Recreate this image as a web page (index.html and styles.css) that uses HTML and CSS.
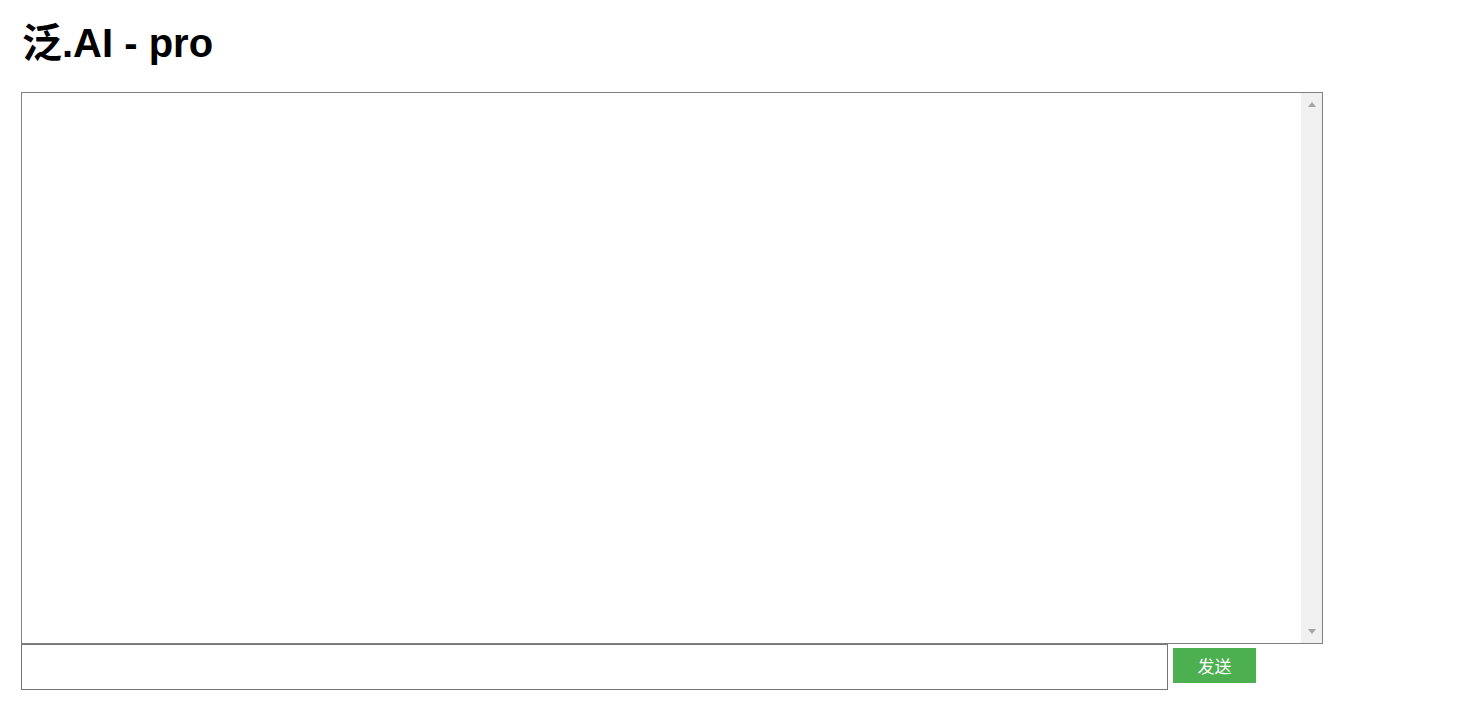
FILE: index.html
```html
<!DOCTYPE html>
<html lang="zh">
<head>
  <meta charset="UTF-8">
  <title>泛.AI - pro</title>
  <link rel="stylesheet" href="styles.css">
</head>
<body>
  <h1 class="title">泛.AI - pro</h1>

  <div class="chat-box">
    <div id="messages" class="messages"></div>
    <div class="scroll-track">
      <span class="arrow-up"></span>
      <span class="arrow-down"></span>
    </div>
  </div>

  <div class="input-row">
    <input type="text" id="user-input" class="user-input">
    <button class="btn-send" onclick="sendMessage()">发送</button>
  </div>

  <script>
    function sendMessage() {
      const input = document.getElementById('user-input');
      const box = document.getElementById('messages');
      const text = input.value.trim();
      if (!text) return;
      const p = document.createElement('p');
      p.textContent = text;
      box.appendChild(p);
      input.value = '';
    }
  </script>
</body>
</html>
```

FILE: styles.css
```css
body {
  margin: 0;
  padding: 0 21px;
  font-family: "Liberation Sans", "Noto Sans CJK SC", Arial, sans-serif;
  background-color: white;
}
.title {
  margin: 0;
  padding: 20px 0 0 1px;
  height: 92px;
  box-sizing: border-box;
  font-size: 40px;
  line-height: 46px;
  font-weight: bold;
  color: black;
}
.chat-box {
  display: flex;
  width: 1300px;
  height: 550px;
  border: 1px solid #808080;
  background-color: white;
}
.messages {
  flex: 1;
  overflow-y: auto;
  padding: 0 10px;
}
.scroll-track {
  width: 21px;
  background-color: #f0f0f0;
  display: flex;
  flex-direction: column;
  justify-content: space-between;
  align-items: center;
  padding: 9px 0;
  box-sizing: border-box;
}
.arrow-up, .arrow-down {
  width: 0;
  height: 0;
  border-left: 4px solid transparent;
  border-right: 4px solid transparent;
}
.arrow-up {
  border-bottom: 5px solid #a3a3a3;
}
.arrow-down {
  border-top: 5px solid #a3a3a3;
}
.input-row {
  display: flex;
  align-items: flex-start;
  gap: 5px;
}
.user-input {
  width: 1147px;
  height: 46px;
  margin: 0;
  box-sizing: border-box;
  border: 1px solid #767676;
  padding: 2px 4px;
  font-size: 14px;
}
.btn-send {
  margin-top: 4px;
  width: 83px;
  height: 35px;
  padding: 0;
  border: none;
  background-color: #4caf50;
  color: white;
  font-size: 17px;
  font-family: "Noto Sans CJK SC", sans-serif;
  cursor: pointer;
}
```
